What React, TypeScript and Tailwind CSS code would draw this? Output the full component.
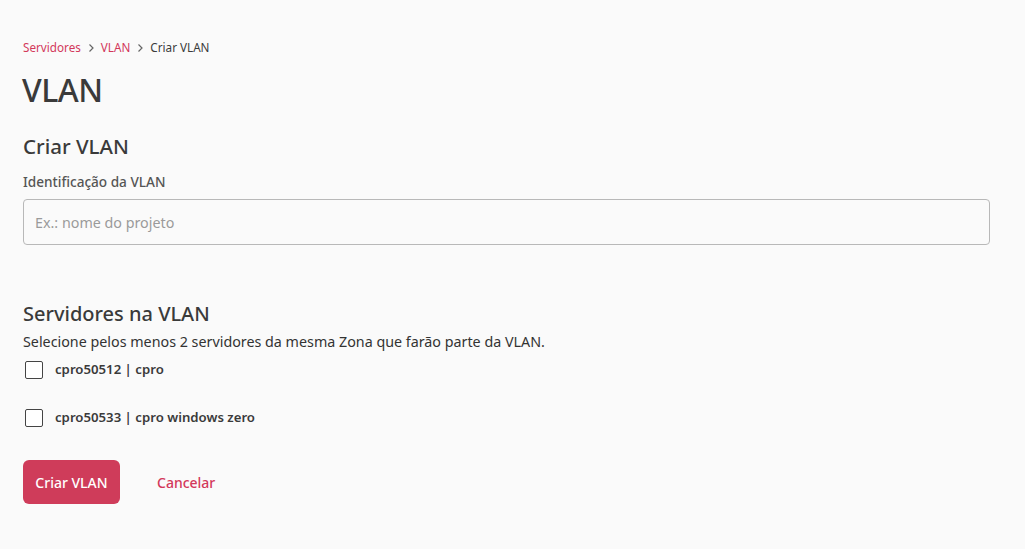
import React from "react";

function Chevron() {
  return (
    <svg width="8" height="10" viewBox="0 0 8 10" className="mx-[6px]" fill="none" stroke="#666" strokeWidth="1.2">
      <path d="M2.5 1.5 L6 5 L2.5 8.5" />
    </svg>
  );
}

export default function App() {
  return (
    <div
      className="min-h-[549px] w-full bg-[#fafafa] text-[#3b3b3b] pl-[23px] pr-[35px] pt-[40px]"
      style={{ fontFamily: '"Noto Sans", "Open Sans", sans-serif' }}
    >
      <nav className="flex items-center text-[11.7px] h-[16px]">
        <span className="text-[#d3385a]">Servidores</span>
        <Chevron />
        <span className="text-[#d3385a]">VLAN</span>
        <Chevron />
        <span className="text-[#3b3b3b]">Criar VLAN</span>
      </nav>
      <h1 className="mt-[16px] text-[32px] leading-[36px] font-medium text-[#3a3a3a] -ml-[1px] tracking-[-0.5px]">VLAN</h1>
      <h2 className="mt-[25px] text-[20.5px] leading-[26px] font-medium text-[#3a3a3a]">Criar VLAN</h2>
      <label className="block mt-[14px] text-[13.6px] leading-[18px] font-medium text-[#555]">Identificação da VLAN</label>
      <input
        className="mt-[8px] w-full h-[46px] rounded-[4px] border border-[#b8b8b8] bg-[#fafafa] px-[11px] text-[14.3px] placeholder:text-[#9a9a9a] outline-none"
        placeholder="Ex.: nome do projeto"
      />
      <h2 className="mt-[56px] text-[20px] leading-[26px] font-medium text-[#3a3a3a]">Servidores na VLAN</h2>
      <p className="mt-[5px] text-[14.3px] leading-[20px] text-[#333]">
        Selecione pelos menos 2 servidores da mesma Zona que farão parte da VLAN.
      </p>
      <div className="flex flex-col gap-[30px] mt-[9px]">
        {["cpro50512 | cpro", "cpro50533 | cpro windows zero"].map((t) => (
          <label key={t} className="flex items-center h-[18px]">
            <span className="ml-[2px] w-[18px] h-[18px] border-[1.5px] border-[#444] rounded-[2px] bg-white" />
            <span className="ml-[12px] text-[13.2px] font-semibold text-[#3a3a3a]">{t}</span>
          </label>
        ))}
      </div>
      <div className="flex items-center mt-[33px]">
        <button className="h-[44px] w-[97px] rounded-[6px] bg-[#cf3c5a] text-white text-[14px] font-medium">
          Criar VLAN
        </button>
        <button className="ml-[37px] text-[14px] font-medium text-[#d3385a]">Cancelar</button>
      </div>
    </div>
  );
}
